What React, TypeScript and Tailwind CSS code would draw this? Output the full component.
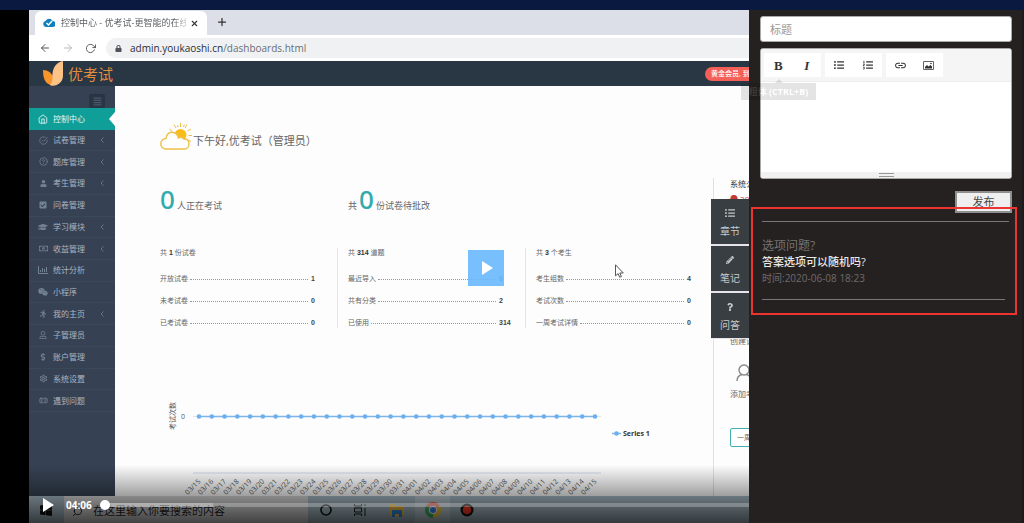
import type { ReactNode } from 'react';
import {
  FaUser, FaRegUser, FaCheckSquare, FaGraduationCap, FaRegMoneyBillAlt, FaWeixin, FaDollarSign,
  FaLock, FaListUl, FaListOl, FaPencilAlt, FaQuestion, FaRunning, FaAlignJustify,
} from 'react-icons/fa';
import { FiHome, FiCheckCircle, FiHelpCircle, FiX, FiPlus, FiArrowLeft, FiArrowRight, FiRotateCw, FiSearch } from 'react-icons/fi';
import { MdLink, MdOutlineSettings } from 'react-icons/md';
import { LuBandage } from 'react-icons/lu';

interface NavItem {
  label: string;
  icon: ReactNode;
  hasChildren?: boolean;
}

const BarsIcon = () => (
  <svg className="h-2 w-[10px]" viewBox="0 0 10 8" fill="none" stroke="currentColor">
    <path d="M.5 0v7.500H10M2.500 6V4M4.500 6V2M6.500 6V3M8.500 6V1" />
  </svg>
);

const NAV: NavItem[] = [
  { label: '控制中心', icon: <FiHome size={10} /> },
  { label: '试卷管理', icon: <FiCheckCircle size={9} />, hasChildren: true },
  { label: '题库管理', icon: <FiHelpCircle size={9} />, hasChildren: true },
  { label: '考生管理', icon: <FaUser size={7} />, hasChildren: true },
  { label: '问卷管理', icon: <FaCheckSquare size={8} /> },
  { label: '学习模块', icon: <FaGraduationCap size={10} />, hasChildren: true },
  { label: '收益管理', icon: <FaRegMoneyBillAlt size={9} />, hasChildren: true },
  { label: '统计分析', icon: <BarsIcon /> },
  { label: '小程序', icon: <FaWeixin size={10} /> },
  { label: '我的主页', icon: <FaRunning size={8} />, hasChildren: true },
  { label: '子管理员', icon: <FaRegUser size={8} /> },
  { label: '账户管理', icon: <FaDollarSign size={8} /> },
  { label: '系统设置', icon: <MdOutlineSettings size={9} /> },
  { label: '遇到问题', icon: <LuBandage size={9} /> },
];

const GROUPS = [
  { total: '1', unit: '份试卷', rows: [['开放试卷', '1'], ['未考试卷', '0'], ['已考试卷', '0']] },
  { total: '314', unit: '道题', rows: [['最近导入', '0'], ['共有分类', '2'], ['已使用', '314']] },
  { total: '3', unit: '个考生', rows: [['考生组数', '4'], ['考试次数', '0'], ['一周考试详情', '0']] },
];

// 03/15 - 04/15
const DAYS = Array.from({ length: 32 }, (_, i) => {
  const day = 15 + i;
  return day <= 31 ? `03/${day}` : `04/${String(day - 31).padStart(2, '0')}`;
});

function BrowserChrome() {
  return (
    <>
      <div className="flex h-[25px] items-end bg-[#dcdfe7]">
        <div className="ml-[6px] flex h-6 w-[172px] items-center rounded-t-md bg-white pl-2 pr-2">
          <svg className="h-3 w-3 shrink-0" viewBox="0 0 24 24">
            <path d="M6 20a6 6 0 0 1-1-11.800A7.500 7.500 0 0 1 19 8a6 6 0 0 1 0 12z" fill="#0f7fc0" />
            <path d="M7 12l4 4 7-8" fill="none" stroke="#fff" strokeWidth="3" />
          </svg>
          <span className="ml-[6px] flex-1 overflow-hidden whitespace-nowrap bg-linear-to-r from-[#55585c] from-90% to-[#55585c]/30 bg-clip-text text-[9px] leading-4 text-transparent">
            控制中心 - 优考试-更智能的在线
          </span>
          <button aria-label="关闭标签页" className="ml-1 text-[#333]"><FiX size={9} strokeWidth={3} /></button>
        </div>
        <button aria-label="新标签页" className="ml-[9px] mb-[7px] text-[#333]"><FiPlus size={12} strokeWidth={2.500} /></button>
      </div>
      <div className="flex h-[26px] items-center bg-white pl-[10px] text-[#50545a]">
        <FiArrowLeft size={12} />
        <FiArrowRight size={12} className="ml-[11px] text-[#b5b8bc]" />
        <FiRotateCw size={11} className="ml-[11px]" />
        <div className="ml-[10px] flex h-5 flex-1 items-center rounded-l-full bg-[#eff1f3] pl-[9px]">
          <FaLock size={7} />
          <span className="ml-2 text-[10px] leading-4 text-[#6a6e73]">
            <span className="text-[#2b2e33]">admin.youkaoshi.cn</span>/dashboards.html
          </span>
        </div>
      </div>
    </>
  );
}

function AppBar() {
  return (
    <div className="flex h-[25px] items-center overflow-hidden bg-[#293644]">
      <svg className="ml-[14px] h-[25px] w-5 shrink-0" viewBox="0 0 20 25">
        <path d="M20 0v15a10 10 0 0 1-12 9.500C4 23 9 18 9.500 13 10 6 14 1 20 0z" fill="#fcc286" />
        <path d="M0 9c5 0 9 3 9.500 7 0 4-1 7-3 7.500C2 22 0 17 0 9z" fill="#f8952b" />
      </svg>
      <span className="ml-[5px] text-[15px] leading-6 text-[#e08d3c]">优考试</span>
      <div className="ml-auto w-11 overflow-hidden whitespace-nowrap rounded-l-full bg-[#f46057] pl-[6px] text-[7px] leading-[14px] font-medium text-white">
        黄金会员, 到期
      </div>
    </div>
  );
}

function Sidebar() {
  return (
    <nav className="w-[86px] shrink-0 bg-[#364253]">
      <div className="flex h-[22px] items-end justify-end pr-[10px]">
        <button aria-label="菜单" className="flex h-[14px] w-4 items-center justify-center rounded-xs bg-[#2a3543] text-[#4a586b]">
          <FaAlignJustify size={9} />
        </button>
      </div>
      <ul className="grid h-[304px] auto-rows-fr text-[8px] text-[#a9b4c3]">
        {NAV.map((item, i) => (
          <li key={item.label} className={i === 0 ? 'relative bg-[#109e98] text-[#e3f6f5]' : 'border-b border-[#3b485a]'}>
            <a href="#" className="flex h-full items-center pl-[9px] pr-[11px]">
              <span className={`flex w-[10px] justify-center ${i === 0 ? '' : 'text-[#738195]'}`}>{item.icon}</span>
              <span className="ml-[5px]">{item.label}</span>
              {item.hasChildren && (
                <svg className="ml-auto h-[6px] w-1" viewBox="0 0 4 6" fill="none" stroke="#66758a">
                  <path d="M3.500 0.500L1 3l2.500 2.500" />
                </svg>
              )}
            </a>
            {i === 0 && (
              <svg className="absolute right-0 top-1 h-[14px] w-[6px]" viewBox="0 0 6 14">
                <path d="M6 0v14L0 7z" fill="#fff" />
              </svg>
            )}
          </li>
        ))}
      </ul>
    </nav>
  );
}

function Chart() {
  return (
    <svg className="h-[168px] w-full overflow-visible" viewBox="0 0 564 168" preserveAspectRatio="xMinYMin meet">
      <text x="26" y="88" fontSize="7" fill="#555" textAnchor="middle" transform="rotate(-90 26 88)">考试次数</text>
      <text x="32" y="91" fontSize="7" fill="#555">0</text>
      <path d="M44 88.500h408" stroke="#e3e3e3" />
      <path d="M50 88.500h396" stroke="#7cb5ec" strokeWidth="1.500" />
      <path d="M44 145h408" stroke="#ccd6eb" />
      {DAYS.map((d, i) => {
        const x = 50 + (i * 396) / 31;
        return (
          <g key={d}>
            <circle cx={x} cy="88.500" r="2.300" fill="#6dafee" />
            <text x={x + 2} y="154" fontSize="7" fill="#555" textAnchor="end" transform={`rotate(-45 ${x + 2} 154)`}>{d}</text>
          </g>
        );
      })}
      <path d="M463 105.500h9" stroke="#7cb5ec" strokeWidth="1.500" />
      <circle cx="467.500" cy="105.500" r="2.300" fill="#6dafee" />
      <text x="474" y="108" fontSize="7" fontWeight="700" fill="#333">Series 1</text>
    </svg>
  );
}

function Dashboard() {
  return (
    <div className="flex flex-1 bg-[#fdfdfd] pl-[34px] text-[#666]">
      <main className="flex-1 pt-9">
        <div className="flex h-7 items-end pl-[11px]">
          <svg className="h-[27px] w-8" viewBox="0 0 32 27" fill="none" stroke="#eec04a">
            <circle cx="20.500" cy="12" r="6" fill="#f8bd1a" stroke="none" />
            <path d="M20.500 4V0M16 5l-2-3.500M25 5l2-3.500M27.500 8l3.500-2M28.500 12.500h3.500M28 17l3 1.500M12 8L9.500 6M18 4l-.5-2M23.500 4l.8-2.500" />
            <path d="M6 26a5 5 0 0 1 0-10.500C6 11 10 8.500 13.500 9.500c3 .7 4.500 3 4.800 5.500 2-1 4.500-.5 5.700 1.200 2.700-.7 5 1.500 5 4.800 0 3-2 5-4.500 5z" fill="#fff" strokeWidth="1.400" />
          </svg>
          <h1 className="ml-px text-[11px] leading-[18px]">下午好,优考试（管理员）</h1>
        </div>
        <div className="mt-[33px] grid h-8 grid-cols-3 font-['Noto_Sans','Noto_Sans_CJK_SC',sans-serif] text-[9px]">
          <div className="pl-[11px] leading-8">
            <b className="mr-[2px] text-[26px] leading-8 font-medium text-[#31abae]">0</b>人正在考试
          </div>
          <div className="pl-[11px] leading-8">
            共<b className="mx-[2px] text-[26px] leading-8 font-medium text-[#31abae]">0</b>份试卷待批改
          </div>
        </div>
        <div className="mt-[33px] grid grid-cols-3 font-['Liberation_Sans','Noto_Sans_CJK_SC',sans-serif] text-[7px] leading-[10px]">
          {GROUPS.map((g, i) => (
            <section key={g.unit} className={`border-l pl-[10px] ${i === 0 ? 'border-transparent' : 'border-[#e4e4e4]'}`}>
              <h2>共 <b className="text-[#333]">{g.total}</b> {g.unit}</h2>
              <dl className="mt-4 flex flex-col gap-3">
                {g.rows.map(([label, value]) => (
                  <div key={label} className="flex items-center">
                    <dt>{label}</dt>
                    <div className="ml-[2px] mr-[3px] flex-1 border-t border-dotted border-[#999]" />
                    <dd className="w-[26px] font-bold text-[#444]">{value}</dd>
                  </div>
                ))}
              </dl>
            </section>
          ))}
        </div>
        <Chart />
      </main>
      <aside className="mt-[92px] w-9 overflow-hidden whitespace-nowrap border-l border-[#e0e0e0] pl-4 text-[8px] leading-3">
        <p className="text-[#333]">系统公告</p>
        <p className="mt-[3px] text-[#c23b3b]">● 2020</p>
        <p className="mt-[80px]">发布公告</p>
        <p className="mt-[38px]">创建试卷</p>
        <svg className="mt-[17px] ml-[6px] h-[18px] w-4" viewBox="0 0 16 18" fill="none" stroke="#888" strokeWidth="1.400">
          <circle cx="8" cy="6" r="5" />
          <path d="M1 17c0-4 3-6 5-6.500M10 10.500c3 .5 5 3 5 6.500" />
        </svg>
        <p className="mt-[6px]">添加考生</p>
        <button className="mt-7 h-[19px] w-14 rounded-xs border border-[#42b0b0] bg-white pl-[6px] text-left text-[7px]">一周考试</button>
      </aside>
    </div>
  );
}

function Taskbar() {
  return (
    <div className="flex h-[27px] items-center bg-[#a9bdc8]">
      <div className="flex h-full w-[35px] items-center pl-[11px] pt-px">
        <svg className="h-3 w-3" viewBox="0 0 12 12" fill="#111">
          <path d="M0 1.500L5.500.8v5H0zM6 .7L12 0v5.800H6zM0 6.300h5.500v5L0 10.500zM6 6.300h6V12l-6-.7z" />
        </svg>
      </div>
      <div className="flex h-full w-[244px] items-center bg-[#dadada] pl-2 pt-1 text-[#222]">
        <FiSearch size={11} className="-scale-x-100" />
        <span className="ml-[10px] text-[11px]">在这里输入你要搜索的内容</span>
      </div>
      <svg className="ml-3 h-3 w-3" viewBox="0 0 12 12"><circle cx="6" cy="6" r="5" fill="none" stroke="#111" strokeWidth="1.600" /></svg>
      <svg className="ml-[22px] h-3 w-3" viewBox="0 0 12 12" fill="none" stroke="#222">
        <path d="M.5 0v2h7V0M.5 12v-2h7v2M.5 4h7v4h-7zM11 0v2M11 4v8" />
      </svg>
      <svg className="ml-[23px] h-[14px] w-4" viewBox="0 0 16 14">
        <path d="M1 1h5l1 2h8v10H1z" fill="#f6bd3c" />
        <path d="M3 7h10v7h-3v-3H6v3H3z" fill="#2f8be0" />
      </svg>
      <div className="ml-[10px] flex h-full w-[35px] items-center justify-center bg-white/25">
        <svg className="h-4 w-4" viewBox="0 0 16 16">
          <path d="M8 8L1.070 4A8 8 0 0 1 14.930 4z" fill="#f5705f" />
          <path d="M8 8L1.070 4A8 8 0 0 0 8 16z" fill="#3fb862" />
          <path d="M8 8L14.930 4A8 8 0 0 1 8 16z" fill="#fdd23c" />
          <circle cx="8" cy="8" r="4" fill="#fff" />
          <circle cx="8" cy="8" r="3" fill="#3f83f0" />
        </svg>
      </div>
      <svg className="ml-[10px] h-[14px] w-[14px]" viewBox="0 0 14 14">
        <circle cx="7" cy="7" r="6.500" fill="#111" />
        <circle cx="7" cy="7" r="4.300" fill="#ff3a24" />
      </svg>
    </div>
  );
}

const SIDE_TABS = [
  { label: '章节', icon: <FaListUl size={10} /> },
  { label: '笔记', icon: <FaPencilAlt size={8} /> },
  { label: '问答', icon: <FaQuestion size={8} /> },
];

function Player() {
  return (
    <section className="relative flex min-w-0 flex-1 flex-col overflow-hidden">
      <BrowserChrome />
      <AppBar />
      <div className="flex flex-1">
        <Sidebar />
        <Dashboard />
      </div>
      <Taskbar />

      <svg className="absolute left-[586px] top-[254px] h-[14px] w-[9px]" viewBox="0 0 9 14">
        <path d="M.5.8v11l2.600-2.200 1.600 3.700 1.700-.8-1.600-3.500h3.500z" fill="#fff" stroke="#555" />
      </svg>
      <button aria-label="播放" className="absolute left-[439px] top-[240px] flex h-9 w-9 items-center justify-center bg-[#68b9fd]/90">
        <svg className="ml-[3px] h-[14px] w-[11px]" viewBox="0 0 11 14"><path d="M0 0l11 7-11 7z" fill="#fff" /></svg>
      </button>

      <div className="absolute right-0 top-[189px] flex flex-col gap-[2px] bg-[#e8e4ee] pb-px">
        {SIDE_TABS.map((tab) => (
          <button key={tab.label} className="flex h-[45px] w-[38px] flex-col items-center bg-[#383e42] pt-2 text-[10px] leading-4 text-[#c8cacc]">
            <span className="flex h-3 items-center">{tab.icon}</span>
            <span className="mt-1">{tab.label}</span>
          </button>
        ))}
      </div>

      <div className="absolute inset-x-0 bottom-0 flex h-[58px] items-end bg-linear-to-b from-transparent to-black/70">
        <div className="flex h-9 flex-1 items-center pl-[14px]">
          <button aria-label="播放">
            <svg className="h-[14px] w-[11px]" viewBox="0 0 11 14"><path d="M0 0l11 7-11 7z" fill="#fff" /></svg>
          </button>
          <span className="ml-3 w-[27px] text-[10px] leading-4 font-bold text-white">04:06</span>
          <div className="relative ml-3 h-1 flex-1 bg-white/25">
            <div className="h-1 w-[108px] bg-white/25" />
            <div className="absolute -left-[5px] -top-[3px] h-[10px] w-[10px] rounded-full bg-white" />
          </div>
        </div>
      </div>
    </section>
  );
}

function Editor() {
  const btn = 'flex h-full flex-1 items-center justify-center';
  return (
    <div className="mt-[6px] overflow-hidden rounded-[3px] border border-[#a9a9a9] bg-white text-[#333]">
      <div className="flex h-[33px] gap-1 border-b border-[#ececec] bg-[#f5f5f5] px-[3px] py-1">
        <div className="flex w-[57px] bg-white font-['Liberation_Serif',serif] text-[13px] leading-none">
          <button aria-label="粗体" className={`${btn} font-bold`}>B</button>
          <button aria-label="斜体" className={`${btn} font-bold italic`}>I</button>
        </div>
        <div className="flex w-[57px] bg-white">
          <button aria-label="无序列表" className={btn}><FaListUl size={10} /></button>
          <button aria-label="有序列表" className={btn}><FaListOl size={10} /></button>
        </div>
        <div className="flex w-[57px] bg-white">
          <button aria-label="链接" className={btn}><MdLink size={13} /></button>
          <button aria-label="图片" className={btn}>
            <svg className="h-[9px] w-[11px]" viewBox="0 0 11 9">
              <path d="M.5.5h10v8H.5z" fill="none" stroke="#666" />
              <path d="M2 7.500V6l2-2 1.500 1.500L7.500 4 9 5.500v2z" fill="#333" />
              <circle cx="8" cy="2.500" r=".8" fill="#333" />
            </svg>
          </button>
        </div>
      </div>
      <textarea aria-label="内容" className="block h-[90px] w-full resize-none outline-none" />
      <div className="flex h-[6px] items-center justify-center bg-[#f1f1f1]">
        <div className="h-1 w-[15px] border-y border-[#999]" />
      </div>
    </div>
  );
}

function QuestionPanel() {
  return (
    <aside className="relative w-[275px] shrink-0 border-r-2 border-[#1c1a1c] bg-[#262121] pt-[6px]">
      <div className="pl-[11px] pr-[10px]">
        <input
          aria-label="标题"
          placeholder="标题"
          className="block h-[26px] w-full rounded-[3px] border border-[#a9a9a9] bg-white px-[9px] text-[11px] placeholder:text-[#999]"
        />
        <Editor />
        <button className="mt-3 ml-auto block h-[22px] w-[57px] border-2 border-[#8f8f8f] bg-[#efefef] text-[11px] leading-[18px] text-[#444]">
          发布
        </button>
      </div>
      {/* tooltip of the bold button, mid fade */}
      <div className="absolute -left-2 top-[69px] flex flex-col items-center opacity-10">
        <svg className="h-1 w-2" viewBox="0 0 8 4"><path d="M0 4l4-4 4 4z" fill="#000" /></svg>
        <div className="w-[75px] bg-black text-center text-[9px] leading-[17px] font-bold whitespace-nowrap text-white">粗体 (CTRL+B)</div>
      </div>

      <article className="relative ml-[2px] mr-[5px] -mt-[6px] h-[108px] border-2 border-[#ee3430] pl-[9px] pr-[6px] pt-3">
        <hr className="border-[#77787c]" />
        <h2 className="mt-4 text-[12px] leading-4 text-[#77736f]">选项问题?</h2>
        <p className="text-[11px] leading-4 font-medium text-[#e9e9e9]">答案选项可以随机吗?</p>
        <time className="block text-[10px] leading-4 text-[#6d6a6b]">时间:2020-06-08 18:23</time>
        <hr className="mt-[13px] mr-1 border-[#77787c]" />
      </article>
    </aside>
  );
}

export default function App() {
  return (
    <div className="flex min-h-screen flex-col bg-black font-['Open_Sans','Noto_Sans_CJK_SC',sans-serif]">
      <header className="h-[10px] bg-[#0a193f]" />
      <div className="flex flex-1 pl-[29px]">
        <Player />
        <QuestionPanel />
      </div>
    </div>
  );
}
